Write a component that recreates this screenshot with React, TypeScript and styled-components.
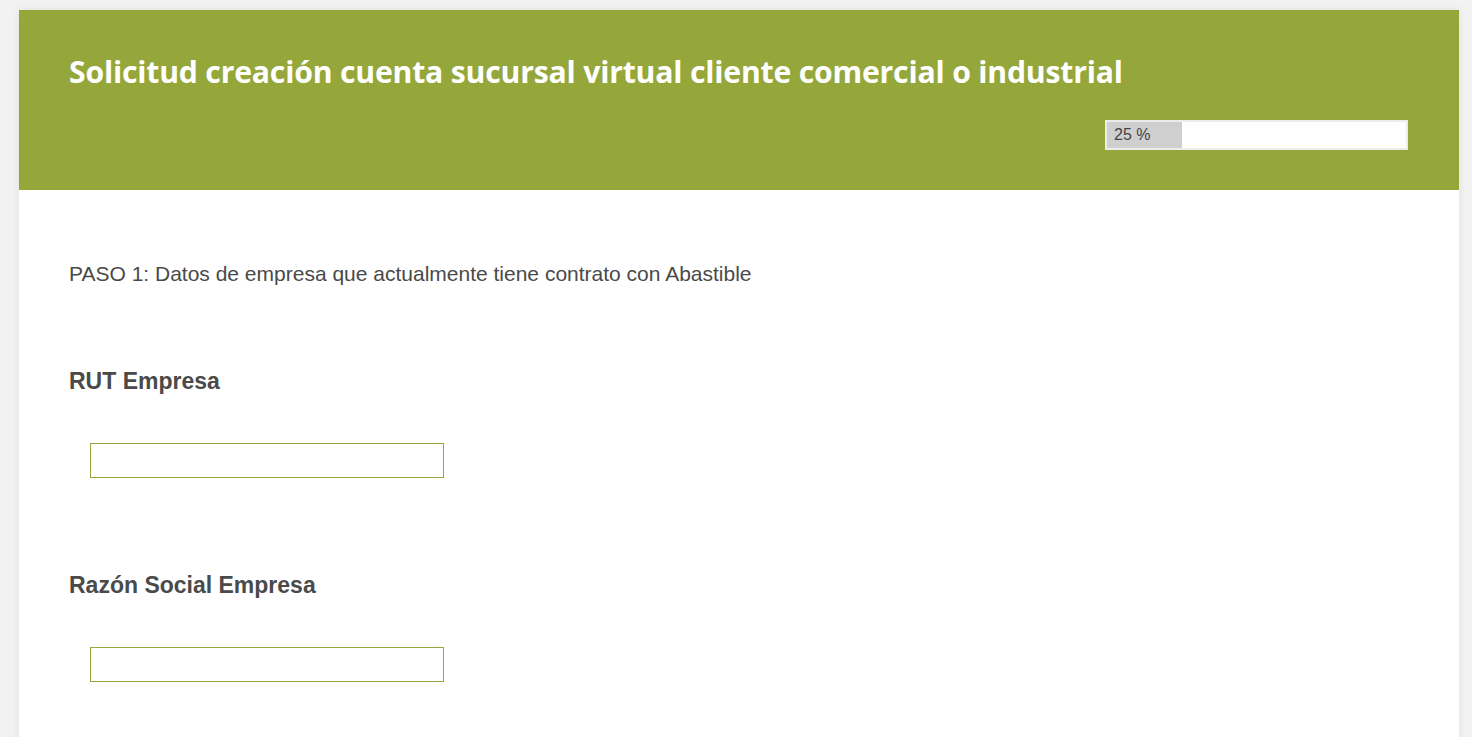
import styled, { createGlobalStyle } from "styled-components";

const GlobalStyle = createGlobalStyle`
  html, body {
    margin: 0;
    padding: 0;
    background: #f2f2f2;
  }
  body {
    font-family: "Liberation Sans", Arial, sans-serif;
    overflow: hidden;
  }
`;

const Page = styled.div`
  padding: 10px 13px 0 19px;
`;

const Card = styled.div`
  width: 1440px;
  background: #ffffff;
  box-shadow: 0 0 8px rgba(0, 0, 0, 0.08);
  min-height: 727px;
`;

const Header = styled.header`
  background: #95a73b;
  height: 180px;
  box-sizing: border-box;
  padding: 40px 51px 0 50px;
  display: flex;
  flex-direction: column;
`;

const Title = styled.h1`
  margin: 0;
  color: #ffffff;
  font-family: "Open Sans", "DejaVu Sans", sans-serif;
  font-weight: 700;
  font-size: 30.2px;
  line-height: 44px;
  letter-spacing: -0.2px;
`;

const Progress = styled.div`
  align-self: flex-end;
  margin-top: 26px;
  width: 303px;
  height: 30px;
  box-sizing: border-box;
  border: 2px solid #ececec;
  background: #ffffff;
  display: flex;
`;

const ProgressFill = styled.div<{ $pct: number }>`
  width: ${(p) => p.$pct}%;
  background: #cfcfcf;
  color: #444444;
  font-size: 16px;
  line-height: 26px;
  padding-left: 7px;
  box-sizing: border-box;
  white-space: nowrap;
`;

const Body = styled.main`
  padding: 61px 50px 40px 50px;
`;

const Step = styled.p`
  margin: 0 0 70px 0;
  color: #4a4a4a;
  font-size: 21px;
  line-height: 46px;
`;

const Field = styled.section`
  margin-bottom: 93px;
`;

const Label = styled.h2`
  margin: 0 0 48px 0;
  color: #4a4a4a;
  font-size: 23px;
  font-weight: 700;
  line-height: 28px;
`;

const TextInput = styled.input`
  display: block;
  margin-left: 21px;
  width: 354px;
  height: 35px;
  box-sizing: border-box;
  border: 1px solid #97a640;
  background: #ffffff;
  outline: none;
  padding: 0 8px;
  font-size: 16px;
`;

export default function App() {
  const fields = ["RUT Empresa", "Razón Social Empresa"];
  return (
    <>
      <GlobalStyle />
      <Page>
        <Card>
          <Header>
            <Title>Solicitud creación cuenta sucursal virtual cliente comercial o industrial</Title>
            <Progress>
              <ProgressFill $pct={25}>25 %</ProgressFill>
            </Progress>
          </Header>
          <Body>
            <Step>PASO 1: Datos de empresa que actualmente tiene contrato con Abastible</Step>
            {fields.map((f) => (
              <Field key={f}>
                <Label>{f}</Label>
                <TextInput type="text" />
              </Field>
            ))}
          </Body>
        </Card>
      </Page>
    </>
  );
}
